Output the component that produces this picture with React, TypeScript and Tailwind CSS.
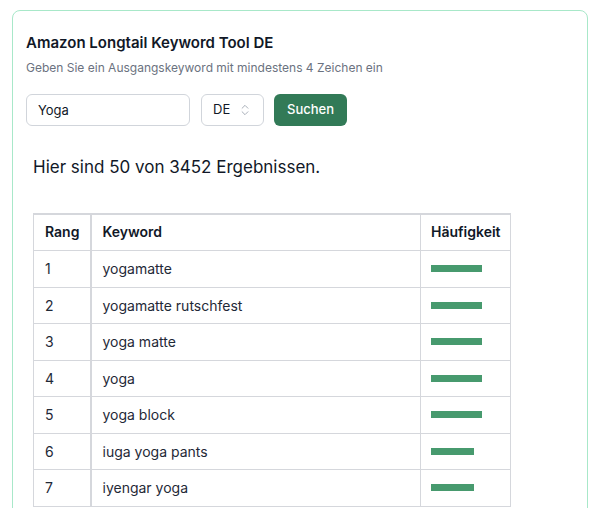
import React from 'react';
import { ChevronsUpDown } from 'lucide-react';

type Row = { rank: number; keyword: string; freq: number };

const rows: Row[] = [
  { rank: 1, keyword: 'yogamatte', freq: 51 },
  { rank: 2, keyword: 'yogamatte rutschfest', freq: 51 },
  { rank: 3, keyword: 'yoga matte', freq: 51 },
  { rank: 4, keyword: 'yoga', freq: 51 },
  { rank: 5, keyword: 'yoga block', freq: 51 },
  { rank: 6, keyword: 'iuga yoga pants', freq: 43 },
  { rank: 7, keyword: 'iyengar yoga', freq: 43 },
];

export default function App() {
  return (
    <div className="min-h-screen bg-white px-3 pt-[10px] font-['Inter',sans-serif] text-[#111827]">
      <div className="rounded-lg border border-[#a8e8c9] px-[13px] pt-[20px] pb-6">
        <h1 className="text-[15px] leading-6 font-semibold">Amazon Longtail Keyword Tool DE</h1>
        <p className="mt-[5px] text-xs leading-4 text-[#6b7280]">
          Geben Sie ein Ausgangskeyword mit mindestens 4 Zeichen ein
        </p>

        <div className="mt-[18px] flex items-center">
          <input
            defaultValue="Yoga"
            className="h-8 w-[164px] rounded-md border border-[#d1d5db] px-[11px] text-[13px] text-[#111827] outline-none"
          />
          <div className="ml-[11px] flex h-8 w-[63px] items-center justify-between rounded-md border border-[#d1d5db] pr-[11px] pl-[11px] text-[13px]">
            <span>DE</span>
            <ChevronsUpDown className="h-[14px] w-[14px] text-[#9ca3af]" strokeWidth={1.5} />
          </div>
          <button className="ml-[10px] h-8 w-[73px] rounded-md bg-[#327a57] text-[13px] font-medium text-white">
            Suchen
          </button>
        </div>

        <div className="pl-[7px]">
          <p className="mt-[27px] text-[17px] leading-7 text-[#111827]">Hier sind 50 von 3452 Ergebnissen.</p>

          <table className="mt-[32px] w-[477px] table-fixed border-collapse text-sm">
            <colgroup>
              <col className="w-[57px]" />
              <col className="w-[330px]" />
              <col className="w-[90px]" />
            </colgroup>
            <thead>
              <tr>
                <th className="border border-t-2 border-r-2 border-[#d5d7dc] px-[11px] pt-[7px] pb-[9px] text-left leading-[19px] font-semibold">
                  Rang
                </th>
                <th className="border border-t-2 border-[#d5d7dc] px-[11px] pt-[7px] pb-[9px] text-left leading-[19px] font-semibold">
                  Keyword
                </th>
                <th className="border border-t-2 border-[#d5d7dc] px-[10px] pt-[7px] pb-[9px] text-left leading-[19px] font-semibold">
                  Häufigkeit
                </th>
              </tr>
            </thead>
            <tbody>
              {rows.map((r) => (
                <tr key={r.rank}>
                  <td className="border border-r-2 border-[#d5d7dc] px-[11px] py-2 leading-[19.5px] text-[#1f2937]">{r.rank}</td>
                  <td className="border border-[#d5d7dc] px-[11px] py-2 leading-[19.5px] text-[#1f2937]">{r.keyword}</td>
                  <td className="border border-[#d5d7dc] px-[10px] py-2 leading-[19.5px]">
                    <div className="h-[7px] bg-[#479a6e]" style={{ width: r.freq }} />
                  </td>
                </tr>
              ))}
            </tbody>
          </table>
        </div>
      </div>
    </div>
  );
}
